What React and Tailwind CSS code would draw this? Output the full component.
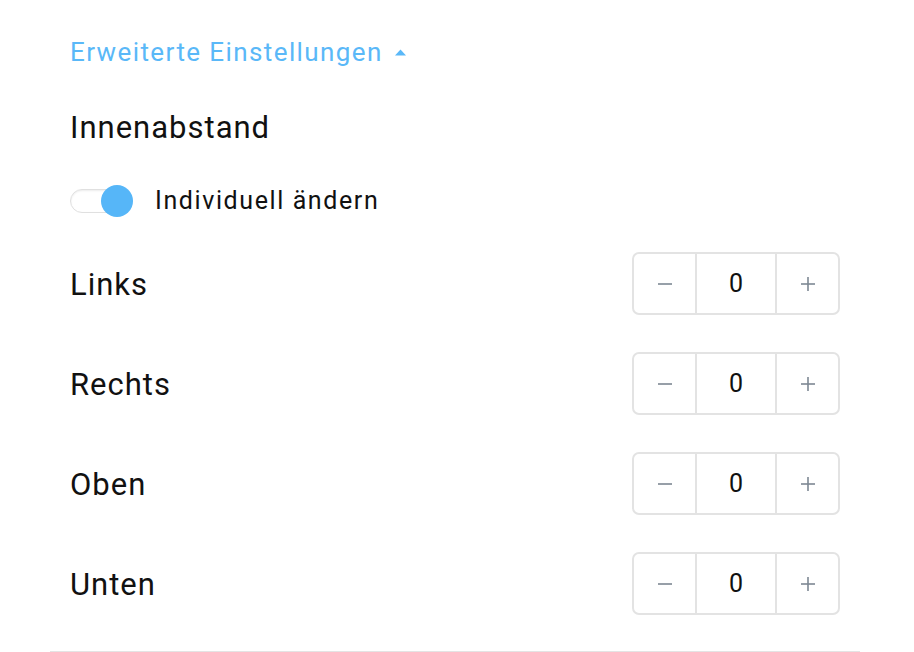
import React, { useState } from "react";

const ROWS = ["Links", "Rechts", "Oben", "Unten"];

// Zähler mit Minus / Wert / Plus
function Stepper({ value, onChange }) {
  return (
    <div className="flex h-[63px] w-[208px] rounded-[7px] border-2 border-[#e3e3e3] bg-white">
      <button
        onClick={() => onChange(value - 1)}
        className="flex w-[63px] items-center justify-center border-r-2 border-[#e3e3e3]"
      >
        <svg width="16" height="16" viewBox="0 0 16 16">
          <line x1="1" y1="8" x2="15" y2="8" stroke="#7d8893" strokeWidth="1.6" />
        </svg>
      </button>
      <div className="flex flex-1 items-center justify-center text-[25px] text-[#111]">{value}</div>
      <button
        onClick={() => onChange(value + 1)}
        className="flex w-[63px] items-center justify-center border-l-2 border-[#e3e3e3]"
      >
        <svg width="16" height="16" viewBox="0 0 16 16">
          <line x1="1" y1="8" x2="15" y2="8" stroke="#7d8893" strokeWidth="1.6" />
          <line x1="8" y1="1" x2="8" y2="15" stroke="#7d8893" strokeWidth="1.6" />
        </svg>
      </button>
    </div>
  );
}

export default function App() {
  const [values, setValues] = useState({ Links: 0, Rechts: 0, Oben: 0, Unten: 0 });

  return (
    <div className="h-[652px] overflow-hidden bg-white pl-[50px] pr-[54px] font-['Roboto',sans-serif] text-[#111]">
      <div className="pl-5 pr-[20px]">
        {/* Kopf */}
        <div className="mt-[34px] flex h-9 items-center gap-3 text-[26px] tracking-[1.4px] text-[#5ab8f8]">
          <span>Erweiterte Einstellungen</span>
          <svg width="11" height="7" viewBox="0 0 11 7">
            <path d="M0 6.5 L5.5 0.5 L11 6.5 Z" fill="#5ab8f8" />
          </svg>
        </div>

        <div className="mt-[38px] flex h-10 items-center text-[31px] tracking-[1px]">Innenabstand</div>

        {/* Schalter */}
        <div className="mt-[37px] flex h-8 items-center gap-[23px]">
          <div className="relative h-[24px] w-[62px] rounded-full border border-[#e0e0e0] bg-white shadow-[inset_0_1px_2px_rgba(0,0,0,0.08)]">
            <span className="absolute right-[-2px] top-1/2 h-[32px] w-[32px] -translate-y-1/2 rounded-full bg-[#56b6f8]" />
          </div>
          <span className="text-[25px] tracking-[1.6px]">Individuell ändern</span>
        </div>

        {/* Abstände */}
        <div className="mt-[35px] flex flex-col gap-[37px]">
          {ROWS.map((r) => (
            <div key={r} className="flex items-center justify-between">
              <span className="mt-1 text-[31px] tracking-[1px]">{r}</span>
              <Stepper value={values[r]} onChange={(v) => setValues({ ...values, [r]: v })} />
            </div>
          ))}
        </div>
      </div>

      <div className="mt-[36px] border-t border-[#e4e4e4]" />
    </div>
  );
}
